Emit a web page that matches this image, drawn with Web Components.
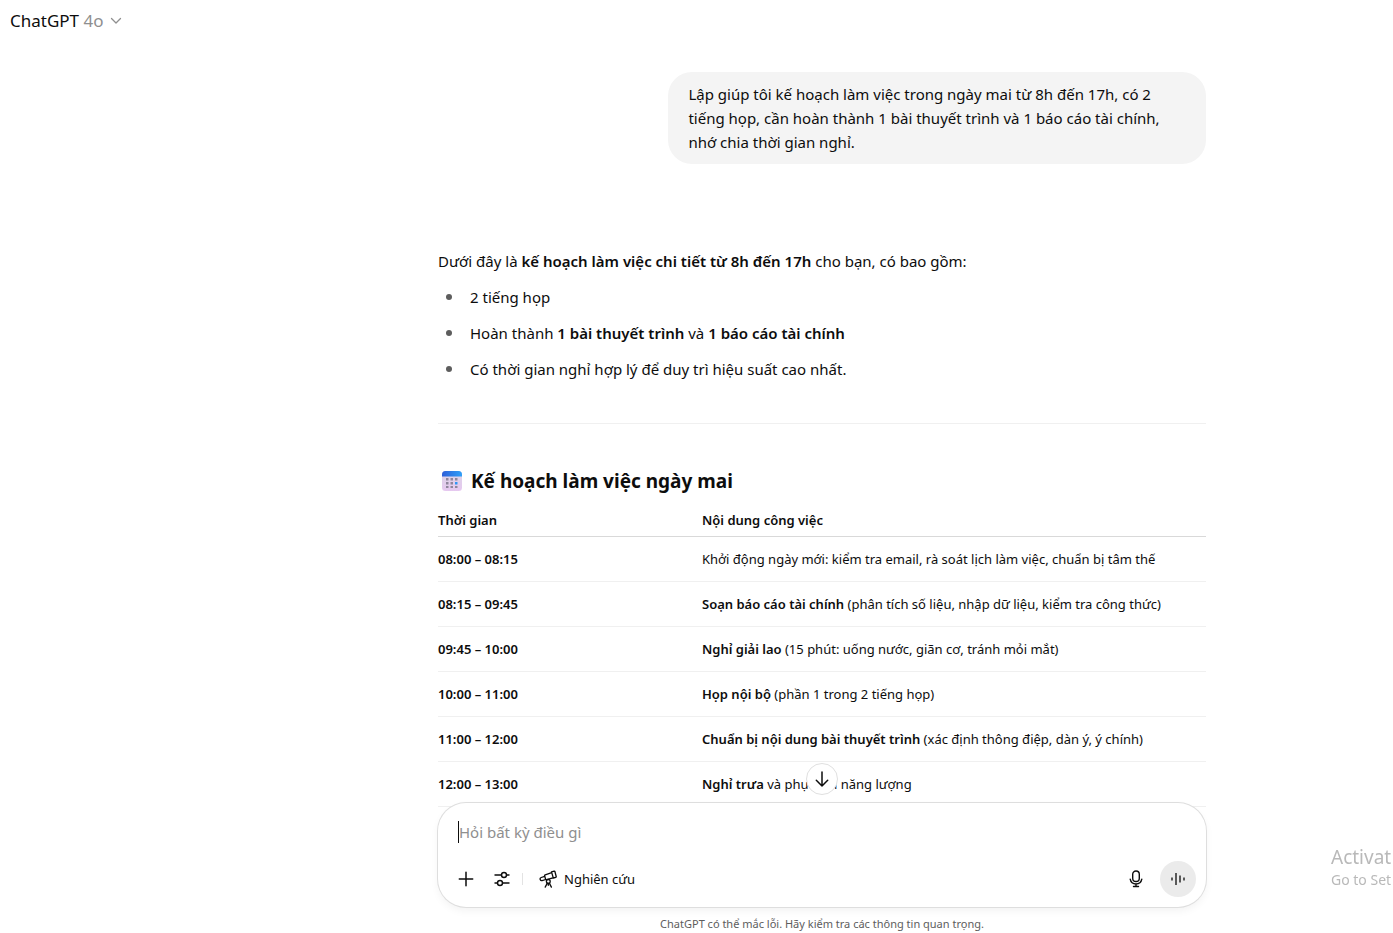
<!DOCTYPE html>
<html lang="vi">
<head>
<meta charset="utf-8">
<meta name="viewport" content="width=device-width, initial-scale=1">
<title>ChatGPT</title>
<style>
  html, body { margin: 0; height: 100%; }
  body {
    background: #fff;
    color: #0d0d0d;
    font-family: "Noto Sans", "Open Sans", sans-serif;
    font-size: 15px;
    line-height: 24px;
  }
</style>
</head>
<body>
<chat-app></chat-app>

<script>
function define(name, html) {
  const template = document.createElement('template');
  template.innerHTML = html;
  customElements.define(name, class extends HTMLElement {
    constructor() {
      super();
      this.attachShadow({ mode: 'open' }).append(template.content.cloneNode(true));
    }
  });
}

define('model-header', `
<style>
  :host { display: flex; align-items: center; height: 42px; padding: 0 2px; }
  button { display: flex; align-items: center; gap: 7px; border: 0; background: none; padding: 0 8px;
    font: inherit; font-size: 17px; line-height: 28px; color: inherit; cursor: pointer; }
  span { color: #8f8f8f; }
  svg { display: block; }
</style>
<button type="button" aria-haspopup="menu"><div>ChatGPT <span>4o</span></div>
  <svg width="12" height="12" viewBox="0 0 12 12" fill="none" stroke="#8f8f8f" stroke-width="1.3" stroke-linecap="round" stroke-linejoin="round"><path d="M1.5 3.500l4.500 4.500L10.500 3.500"/></svg>
</button>`);

define('user-message', `
<style>
  :host { display: flex; justify-content: flex-end; }
  div { box-sizing: border-box; width: 70%; padding: 10px 20px; border-radius: 24px; background: #f4f4f4; }
</style>
<div><slot></slot></div>`);

define('assistant-message', `
<style>
  :host { display: block; }
  p { margin: 0; line-height: 28px; }
  ul { margin: 8px 0 0; padding: 0; list-style: none; display: grid; gap: 8px; line-height: 28px; }
  li { display: flex; align-items: center; gap: 18px; padding-left: 8px; }
  li::before { content: ""; width: 6px; height: 6px; border-radius: 50%; background: #5d5d5d; }
  strong { font-weight: 600; }
  hr { margin: 40px 0 41px; border: 0; height: 1px; background: #f0f0f0; }
  h3 { display: flex; align-items: center; gap: 9px; margin: 0 0 7px; padding-left: 4px; font-size: 19px; line-height: 32px; font-weight: 700; }
  h3 svg { display: block; }
</style>
<p>Dưới đây là <strong>kế hoạch làm việc chi tiết từ 8h đến 17h</strong> cho bạn, có bao gồm:</p>
<ul>
  <li><span>2 tiếng họp</span></li>
  <li><span>Hoàn thành <strong>1 bài thuyết trình</strong> và <strong>1 báo cáo tài chính</strong></span></li>
  <li><span>Có thời gian nghỉ hợp lý để duy trì hiệu suất cao nhất.</span></li>
</ul>
<hr>
<h3>
  <svg width="20" height="20" viewBox="0 0 20 20" aria-hidden="true">
    <defs>
      <linearGradient id="page" x1="0" y1="0" x2="0" y2="1"><stop offset="0" stop-color="#dcd6e6"/><stop offset="1" stop-color="#e6c8f0"/></linearGradient>
      <linearGradient id="band" x1="0" y1="0" x2="1" y2="0"><stop offset="0" stop-color="#2f5fd8"/><stop offset="1" stop-color="#2fa0f8"/></linearGradient>
    </defs>
    <rect width="20" height="20" rx="3.500" fill="url(#page)"/>
    <path d="M0 5.500V3.500A3.500 3.500 0 0 1 3.500 0h13A3.500 3.500 0 0 1 20 3.500v2z" fill="url(#band)"/>
    <g fill="#8f869c"><path d="M4 7h2.500v2.500H4zM8.500 7H11v2.500H8.500zM13 7h2.500v2.500H13zM4 11h2.500v2.500H4zM8.500 11H11v2.500H8.500zM4 15h2.500v2H4zM8.500 15H11v2H8.500zM13 15h2.500v2H13z"/></g>
    <path fill="#2f96f4" d="M13 11h2.500v2.500H13z"/>
  </svg>
  Kế hoạch làm việc ngày mai
</h3>
<plan-table></plan-table>`);

define('plan-table', `
<style>
  :host { display: block; font-size: 13px; }
  table { width: 100%; border-collapse: separate; border-spacing: 0; table-layout: fixed; }
  col:first-child { width: 264px; }
  th, td { text-align: left; padding: 10px 0; border-bottom: 1px solid #f0f0f0; white-space: nowrap; }
  th, strong { font-weight: 600; }
  thead th { padding: 4px 0; border-color: #d9d9d9; }
</style>
<table>
  <colgroup><col><col></colgroup>
  <thead><tr><th scope="col">Thời gian</th><th scope="col">Nội dung công việc</th></tr></thead>
  <tbody>
    <tr><th scope="row">08:00 – 08:15</th><td>Khởi động ngày mới: kiểm tra email, rà soát lịch làm việc, chuẩn bị tâm thế</td></tr>
    <tr><th scope="row">08:15 – 09:45</th><td><strong>Soạn báo cáo tài chính</strong> (phân tích số liệu, nhập dữ liệu, kiểm tra công thức)</td></tr>
    <tr><th scope="row">09:45 – 10:00</th><td><strong>Nghỉ giải lao</strong> (15 phút: uống nước, giãn cơ, tránh mỏi mắt)</td></tr>
    <tr><th scope="row">10:00 – 11:00</th><td><strong>Họp nội bộ</strong> (phần 1 trong 2 tiếng họp)</td></tr>
    <tr><th scope="row">11:00 – 12:00</th><td><strong>Chuẩn bị nội dung bài thuyết trình</strong> (xác định thông điệp, dàn ý, ý chính)</td></tr>
    <tr><th scope="row">12:00 – 13:00</th><td><strong>Nghỉ trưa</strong> và phục hồi năng lượng</td></tr>
  </tbody>
</table>`);

define('prompt-composer', `
<style>
  :host { display: block; position: relative; }
  form { box-sizing: border-box; display: flex; flex-direction: column; gap: 18px; min-height: 104px; padding: 18px 10px 10px;
    border-radius: 28px; background: #fff; box-shadow: 0 0 0 1px #dedede, 0 4px 8px rgba(0,0,0,.05); }
  input { box-sizing: border-box; height: 22px; margin: 0 10px; padding: 0; border: 0; border-left: 1px solid #0d0d0d; outline: 0;
    background: none; font: inherit; color: inherit; }
  input::placeholder { color: #8f8f8f; opacity: 1; }
  .tools { display: flex; align-items: center; }
  button { display: flex; align-items: center; justify-content: center; box-sizing: border-box; width: 36px; height: 36px; padding: 0; border: 0;
    border-radius: 18px; background: none; color: #0d0d0d; font: inherit; font-size: 13px; cursor: pointer; }
  svg { display: block; fill: none; stroke: currentColor; stroke-linecap: round; stroke-linejoin: round; }
  i { width: 1px; height: 12px; margin: 0 8px 0 2px; background: #e3e3e3; }
  .research { width: auto; gap: 7px; padding: 0 8px; }
  .mic { margin-left: auto; margin-right: 6px; }
  .voice { background: #ebebeb; }
  .down { position: absolute; left: 50%; bottom: 100%; margin: 0 0 8px -16px; width: 32px; height: 32px; border: 1px solid #e0e0e0; background: #fff; }
</style>
<button class="down" type="button" aria-label="Cuộn xuống cuối">
  <svg width="20" height="20" viewBox="0 0 20 20" stroke-width="1.500"><path d="M10 3v14M4.300 11.300L10 17l5.700-5.700"/></svg>
</button>
<form>
  <input type="text" aria-label="Hỏi bất kỳ điều gì" placeholder="Hỏi bất kỳ điều gì">
  <div class="tools">
    <button type="button" aria-label="Thêm"><svg width="20" height="20" viewBox="0 0 20 20" stroke-width="1.500"><path d="M10 3.300v13.400M3.300 10h13.400"/></svg></button>
    <button type="button" aria-label="Công cụ"><svg width="20" height="20" viewBox="0 0 20 20" stroke-width="1.400"><path d="M3 6h6.500M14.500 6H17M3 14h2.500M10.500 14H17"/><circle cx="12" cy="6" r="2.500"/><circle cx="8" cy="14" r="2.500"/></svg></button>
    <i></i>
    <button class="research" type="button">
      <svg width="18" height="18" viewBox="0 0 18 18" stroke-width="1.300"><path d="M12.500 1.900l2.600-.8c.4-.1.700 0 .8.400l1.300 5c.1.400 0 .700-.4.800l-2.500.7zM12.700 2.700L6.200 4.800c-.5.200-.7.600-.6 1l1 3.400c.1.400.4.600.9.500l6.500-1.900M5.700 6.300L2.200 7.500c-.9.300-1.300 1.100-1 2 .3.900 1 1.300 1.900 1.100l3.600-1.100"/><circle cx="9.300" cy="11.400" r="1.900" fill="#fff"/><path d="M8.300 13.100l-2.100 4M10.300 13.100l2.100 4M9.300 13.500V15.300"/></svg>
      <span>Nghiên cứu</span>
    </button>
    <button class="mic" type="button" aria-label="Đọc chính tả"><svg width="18" height="18" viewBox="0 0 18 18" stroke-width="1.400"><rect x="5.700" y="1" width="6.600" height="10.500" rx="3.300"/><path d="M3.200 9.200a5.900 5.900 0 0 0 11.600 0M9 14v2.500M6.500 16.500h5"/></svg></button>
    <button class="voice" type="button" aria-label="Chế độ thoại"><svg width="18" height="18" viewBox="0 0 18 18" stroke-width="1.800" style="stroke:#4a4a4a;stroke-linecap:butt"><path d="M3 7.500v3M7 3v12M11 5.500v7M15 7.500v3"/></svg></button>
  </div>
</form>`);

define('os-watermark', `
<style>
  :host { display: block; position: fixed; right: 0; bottom: 43px; width: 62px; white-space: nowrap; color: #b9b9b9; font-size: 14px; line-height: 20px; pointer-events: none; }
  .title { font-size: 19px; line-height: 26px; }
</style>
<div class="title">Activat</div>
<div>Go to Set</div>`);

define('chat-app', `
<style>
  :host { display: flex; flex-direction: column; height: 100vh; overflow: hidden; }
  main, footer { display: grid; grid-template-columns: minmax(0, 1fr) minmax(0, 768px) 187px; }
  main > *, footer > * { grid-column: 2; }
  main { flex: 1; min-height: 0; overflow: hidden; margin-bottom: -32px; align-content: start; row-gap: 83px; padding-top: 30px; box-sizing: border-box; }
  footer { position: relative; }
  small { padding-top: 8px; font-size: 11px; line-height: 18px; text-align: center; color: #5d5d5d; }
</style>
<model-header></model-header>
<main>
  <user-message>Lập giúp tôi kế hoạch làm việc trong ngày mai từ 8h đến 17h, có 2 tiếng họp, cần hoàn thành 1 bài thuyết trình và 1 báo cáo tài chính, nhớ chia thời gian nghỉ.</user-message>
  <assistant-message></assistant-message>
</main>
<footer>
  <prompt-composer></prompt-composer>
  <small>ChatGPT có thể mắc lỗi. Hãy kiểm tra các thông tin quan trọng.</small>
</footer>
<os-watermark></os-watermark>`);
</script>
</body>
</html>
